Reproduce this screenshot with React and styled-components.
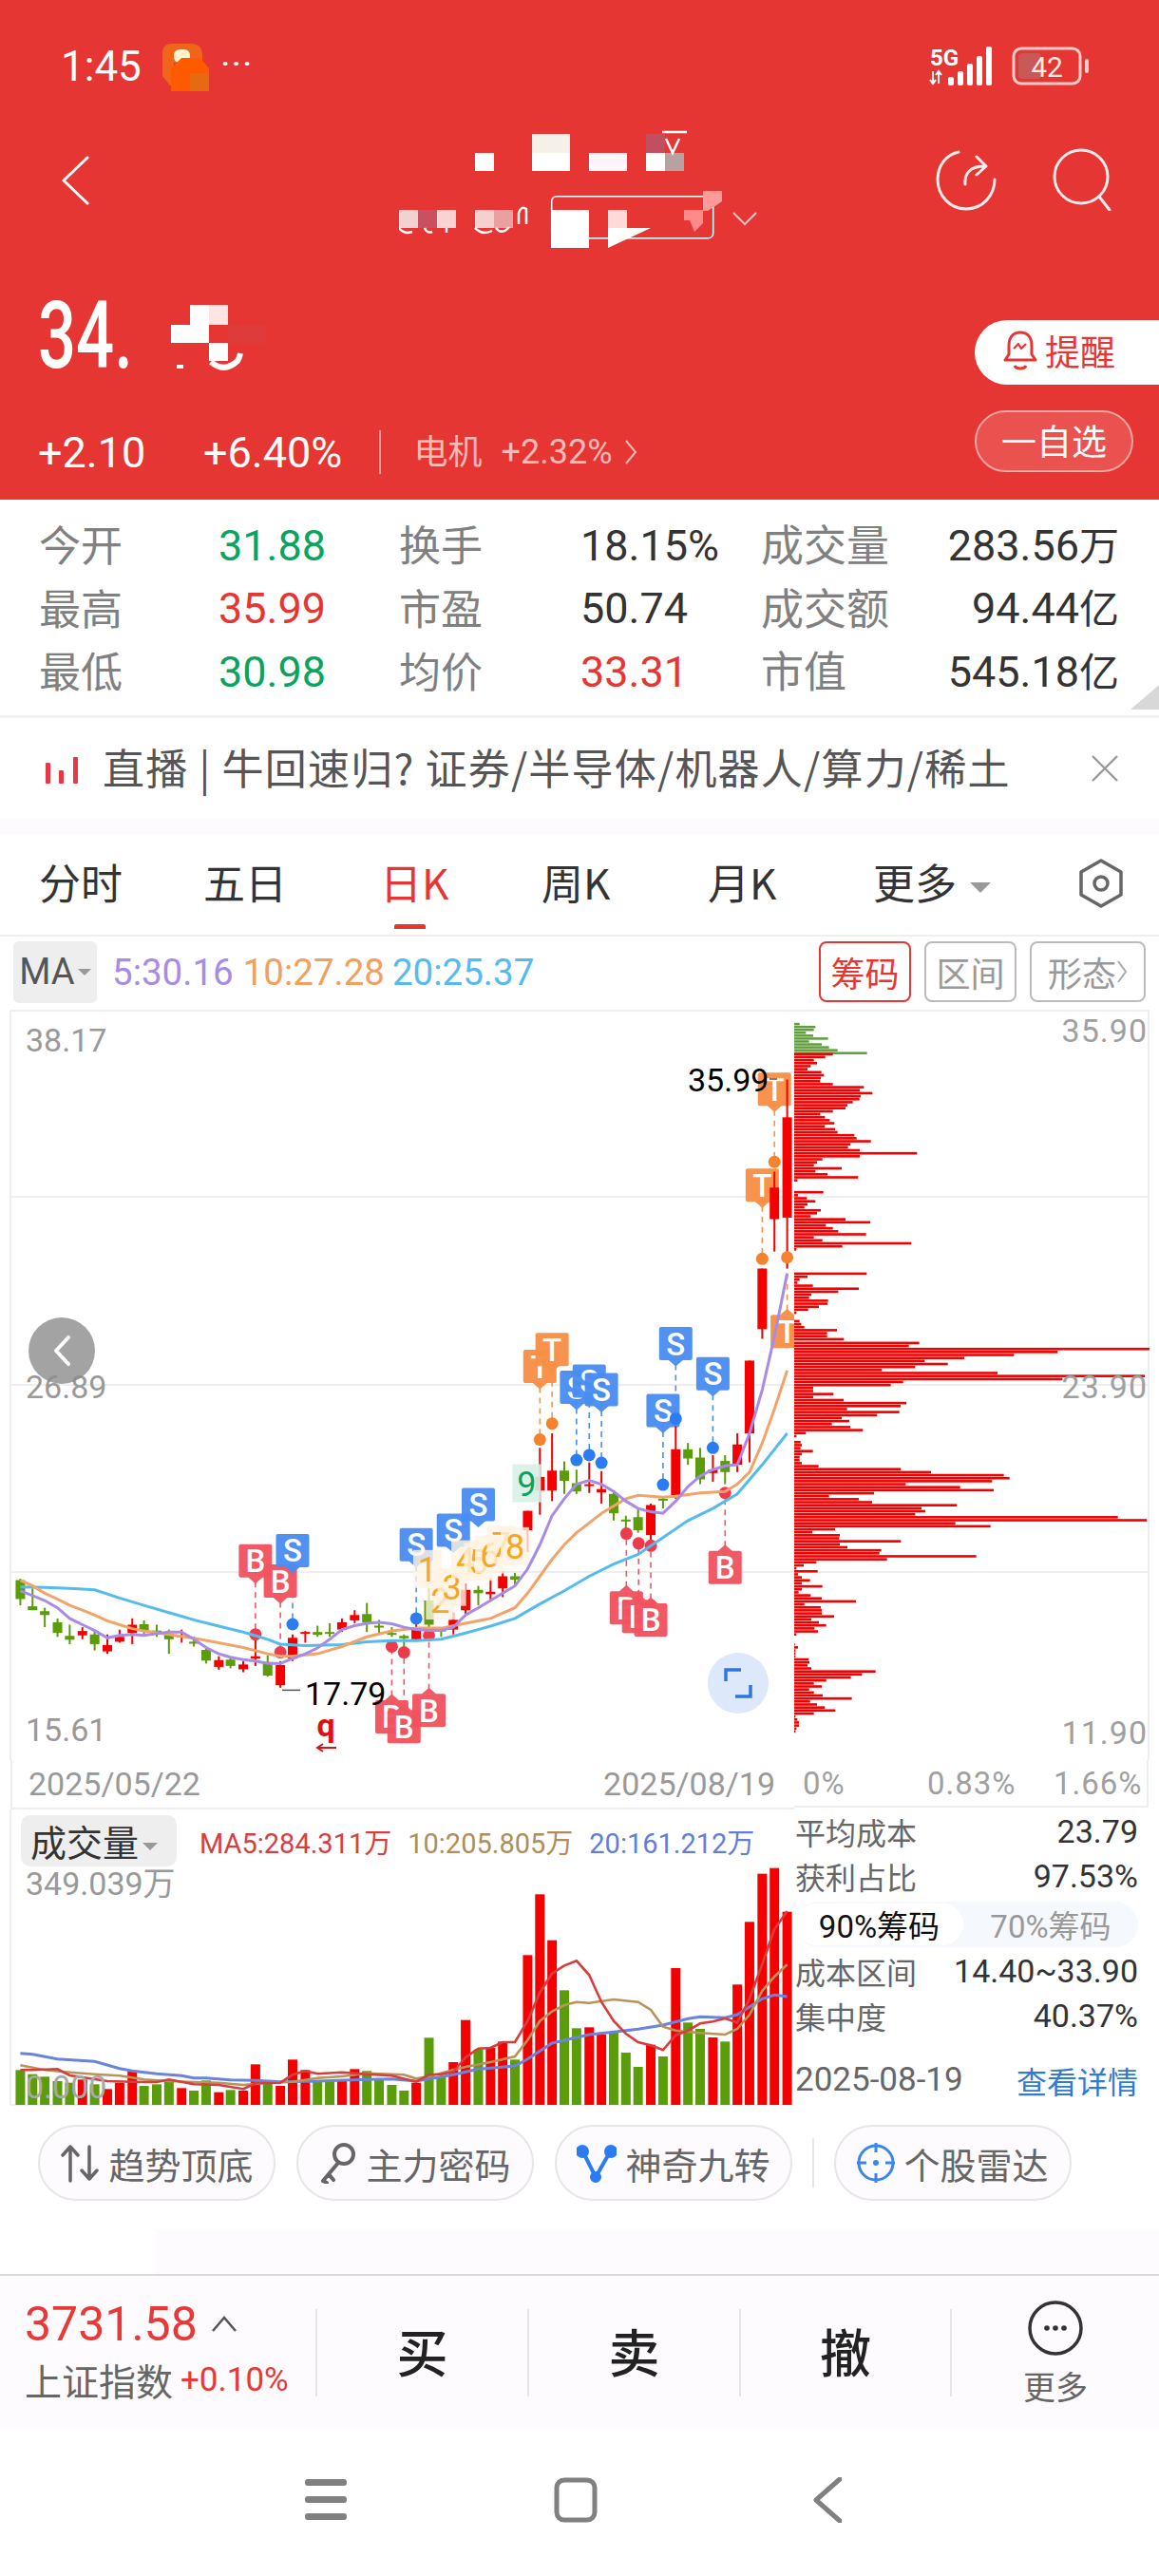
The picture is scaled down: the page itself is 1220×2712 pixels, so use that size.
import React from 'react';
import styled, {createGlobalStyle} from 'styled-components';

const CJK = '"Noto Sans CJK SC", "Noto Sans", sans-serif';
const NUM = 'Roboto, "Noto Sans CJK SC", sans-serif';

const GlobalStyle = createGlobalStyle`
  html, body { margin: 0; padding: 0; background: #fff; }
  body { font-family: ${CJK}; }
`;

const Page = styled.div`
  width: 1220px;
  height: 2712px;
  overflow: hidden;
  background: #fff;
`;

/* ---------- red header ---------- */
const Header = styled.header`
  height: 526px;
  background: #e63633;
  color: #fff;
  overflow: hidden;
`;
const StatusBar = styled.div`
  height: 128px;
  padding: 12px 72px 0 64px;
  display: flex;
  align-items: center;
  box-sizing: border-box;
`;
const Clock = styled.span`
  font: 400 44px ${NUM};
  width: 107px;
`;
const More = styled.span`
  font: 700 28px ${NUM};
  letter-spacing: 3px;
  margin: -8px 0 0 12px;
`;
const StatusRight = styled.div`
  margin-left: auto;
  display: flex;
`;
const NavRow = styled.div`
  height: 144px;
  box-sizing: border-box;
  display: flex;
  align-items: flex-start;
  padding: 2px 50px 0 64px;
`;
const BackWrap = styled.div`
  margin-top: 34px;
  width: 30px;
`;
const Mosaic = styled.svg`
  margin-left: 326px;
  display: block;
`;
const NavIcons = styled.div`
  margin-left: auto;
  display: flex;
  gap: 59px;
  padding-top: 26px;
`;
const QuoteRow = styled.div`
  display: flex;
  height: 254px;
`;
const QuoteLeft = styled.div`
  flex: 1;
  padding-left: 40px;
`;
const PriceBox = styled.div`
  position: relative;
  height: 98px;
  margin-top: 33px;
`;
const Price = styled.div`
  font: 500 98px/98px ${NUM};
  transform: scaleX(0.72);
  transform-origin: left;
  white-space: nowrap;
`;
const PriceMask = styled.svg`
  position: absolute;
  left: 140px;
  top: 13px;
`;
const ChangeRow = styled.div`
  display: flex;
  align-items: center;
  margin-top: 50px;
  height: 46px;
`;
const ChangeVal = styled.span`
  font: 400 45px ${NUM};
  width: ${p => p.$w}px;
`;
const VLine = styled.span`
  width: 1.5px;
  height: 46px;
  background: #f09a98;
  margin-right: 35px;
`;
const Sector = styled.span`
  font: 400 36px/40px ${CJK};
  color: #f8b9b7;
  margin: -6px 20px 0 0;
`;
const SectorPct = styled.span`
  font: 400 36px ${NUM};
  color: #f8b9b7;
  margin-right: 12px;
`;
const QuoteRight = styled.div`
  width: 194px;
  padding-top: 65px;
  display: flex;
  flex-direction: column;
`;
const RemindBtn = styled.div`
  height: 68px;
  box-sizing: border-box;
  background: #fff;
  border-radius: 34px 0 0 34px;
  color: #e63633;
  font: 400 37px/44px ${CJK};
  display: flex;
  align-items: center;
  padding: 0 0 4px 30px;
  gap: 8px;
`;
const WatchBtn = styled.div`
  margin-top: 27px;
  width: 167px;
  height: 65px;
  box-sizing: border-box;
  border: 2px solid #f3a5a3;
  background: #ea5250;
  border-radius: 33px;
  font: 400 37px/44px ${CJK};
  display: flex;
  align-items: center;
  justify-content: center;
  padding-bottom: 4px;
  color: #fff;
`;

/* ---------- quote table ---------- */
const QuoteTable = styled.section`
  height: 230px;
  box-sizing: border-box;
  padding: 15px 42px 0 41px;
  position: relative;
  display: grid;
  grid-template-columns: 189px 190px 191px 190px 133px 1fr;
  grid-auto-rows: 66.5px;
  align-items: center;
  border-bottom: 3px solid #f2f2f2;
`;
const Label = styled.span`
  font: 400 ${p => p.$size || 44}px/60px ${CJK};
  color: #808080;
  margin-top: -4px;
  white-space: nowrap;
`;
const Val = styled.span`
  font: 400 ${p => p.$size || 45}px ${NUM};
  color: ${p => p.$color || '#333'};
  text-align: ${p => p.$right ? 'right' : 'left'};
  white-space: nowrap;
`;
const CjkUnit = styled.span`
  font-family: ${CJK};
  font-size: 42px;
  line-height: 40px;
`;
const CornerMark = styled.span`
  position: absolute;
  right: 0;
  bottom: 6px;
  border-style: solid;
  border-width: 0 0 26px 30px;
  border-color: transparent transparent #d8d8d8 transparent;
`;

/* ---------- notice ---------- */
const Notice = styled.div`
  height: 106px;
  display: flex;
  align-items: center;
  padding: 0 42px 0 48px;
  gap: 26px;
`;
const NoticeText = styled.span`
  font: 400 44px/60px ${CJK};
  letter-spacing: 1.2px;
  color: #555;
  flex: 1;
  white-space: nowrap;
  margin-top: -5px;
`;
const PaleBand = styled.div`
  height: 17px;
  background: #fdfbfd;
`;

/* ---------- tabs ---------- */
const Tabs = styled.nav`
  height: 107px;
  display: flex;
  align-items: center;
  padding: 0 38px 8px 41px;
  box-sizing: border-box;
  border-bottom: 2px solid #eee;
  position: relative;
`;
const Tab = styled.span`
  font: 400 44px/64px ${CJK};
  color: ${p => p.$active ? '#e63633' : '#333'};
  width: ${p => p.$w}px;
  white-space: nowrap;
  position: relative;
`;
const TabMark = styled.i`
  position: absolute;
  left: 15px;
  top: 77px;
  width: 33px;
  height: 5px;
  border-radius: 2px 2px 0 0;
  background: #e63633;
`;
const Caret = styled.i`
  display: inline-block;
  margin-left: ${p => p.$gap || 0}px;
  border-style: solid;
  border-width: ${p => p.$s}px ${p => p.$s}px 0;
  border-color: #999 transparent transparent;
  vertical-align: middle;
`;
const SettingIcon = styled.svg`
  margin-left: auto;
  margin-bottom: -4px;
`;

/* ---------- indicator row ---------- */
const MaRow = styled.div`
  height: 74px;
  display: flex;
  align-items: center;
  padding: 0 14px;
`;
const MaBox = styled.div`
  flex: 0 0 88px;
  height: 65px;
  background: #eee;
  border-radius: 6px;
  font: 400 38px ${NUM};
  color: #555;
  display: flex;
  align-items: center;
  justify-content: center;
  margin-right: 16px;
  white-space: nowrap;
`;
const MaVal = styled.span`
  font: 400 38.5px ${NUM};
  color: ${p => p.$color};
  margin-right: ${p => p.$gap}px;
  white-space: nowrap;
`;
const MaBtn = styled.span`
  flex: 0 0 ${p => p.$w}px;
  height: 64px;
  box-sizing: border-box;
  border: 2px solid ${p => p.$on ? '#e63633' : '#bbb'};
  color: ${p => p.$on ? '#e63633' : '#999'};
  border-radius: 8px;
  font: 400 36px ${CJK};
  display: flex;
  align-items: center;
  justify-content: center;
  margin-left: ${p => p.$auto ? 'auto' : '14px'};
  white-space: nowrap;
`;

/* ---------- chart area ---------- */
const ChartGrid = styled.section`
  display: grid;
  grid-template-columns: 836px 384px;
  height: 1156px;
`;
const ChartCol = styled.div`
  position: relative;
  min-width: 0;
`;
const Plot = styled.svg`
  display: block;
`;
const DateRow = styled.div`
  height: 50px;
  margin-left: 11px;
  border-bottom: 2px solid #eee;
  border-left: 2px solid #eee;
  display: flex;
  align-items: center;
  justify-content: space-between;
  padding: 0 20px 0 17px;
  font: 400 34px ${NUM};
  color: #999;
`;
const PctRow = styled.div`
  width: 373px;
  box-sizing: border-box;
  height: 50px;
  border-bottom: 2px solid #eee;
  border-right: 2px solid #eee;
  display: grid;
  grid-template-columns: 131px 133px 1fr;
  align-items: center;
  padding-left: 9px;
  font: 400 33px ${NUM};
  letter-spacing: 1px;
  color: #a0a0a0;
`;
const FloatBack = styled.div`
  position: absolute;
  left: 30px;
  top: 327px;
  width: 70px;
  height: 70px;
  border-radius: 50%;
  background: rgba(140, 140, 140, 0.8);
  display: flex;
  align-items: center;
  justify-content: center;
`;
const FloatExpand = styled.div`
  position: absolute;
  left: 745px;
  top: 680px;
  width: 64px;
  height: 64px;
  border-radius: 50%;
  background: #dde8fb;
  display: flex;
  align-items: center;
  justify-content: center;
`;
const VolHead = styled.div`
  position: absolute;
  left: 22px;
  top: 851px;
  display: flex;
  align-items: center;
`;
const VolBox = styled.div`
  width: 164px;
  height: 54px;
  box-sizing: border-box;
  background: #eee;
  border-radius: 10px;
  padding-left: 10px;
  font: 400 38px/54px ${CJK};
  color: #333;
  margin-right: 24px;
  white-space: nowrap;
`;
const VolVal = styled.span`
  font: 400 29px ${NUM};
  color: ${p => p.$color};
  margin-right: 17px;
  white-space: nowrap;
`;
const VolPeak = styled.div`
  position: absolute;
  left: 27px;
  top: 896px;
  font: 400 34px ${NUM};
  color: #999;
`;
const VolZero = styled.div`
  position: absolute;
  left: 27px;
  top: 1117px;
  font: 400 34px ${NUM};
  color: #a8a8a8;
`;

const InfoPanel = styled.div`
  padding: 0 22px 0 1px;
`;
const InfoRow = styled.div`
  height: 47px;
  display: flex;
  justify-content: space-between;
  align-items: center;
  margin-top: ${p => p.$top || 0}px;
`;
const InfoLabel = styled.span`
  font: 400 32px/44px ${CJK};
  color: #666;
`;
const InfoDate = styled.span`
  font: 400 35px ${NUM};
  color: #666;
`;
const InfoVal = styled.span`
  font: 400 34px ${NUM};
  color: #333;
`;
const InfoLink = styled.span`
  font: 400 32px ${CJK};
  color: #2f7bd0;
`;
const Toggle = styled.div`
  height: 48px;
  display: flex;
  background: #f5f8fc;
  border-radius: 24px;
  margin: 4px 0 1px;
`;
const ToggleItem = styled.span`
  flex: ${p => p.$on ? '0 0 177px' : 1};
  background: ${p => p.$on ? '#fff' : 'transparent'};
  color: ${p => p.$on ? '#111' : '#999'};
  border-radius: 22px;
  margin: 2px 0;
  font: 400 33px ${NUM};
  display: flex;
  align-items: center;
  justify-content: center;
  white-space: nowrap;
`;

/* ---------- pills ---------- */
const PillRow = styled.div`
  height: 130px;
  display: flex;
  align-items: flex-start;
  padding: 21px 0 0 40px;
  box-sizing: border-box;
  gap: 22px;
`;
const Pill = styled.div`
  width: 250px;
  height: 80px;
  box-sizing: border-box;
  border: 2px solid #e6e6e6;
  background: #fdfbfd;
  border-radius: 40px;
  display: flex;
  align-items: center;
  justify-content: center;
  gap: 9px;
  font: 400 38px ${CJK};
  color: #666;
  white-space: nowrap;
`;
const PillSep = styled.span`
  width: 2px;
  height: 52px;
  margin: 14px -1px 0 -1px;
  background: #e6e6e6;
`;
const BlankBand = styled.div`
  height: 48px;
  margin-left: 163px;
  background: #fdfbfd;
`;

/* ---------- trade bar ---------- */
const TradeBar = styled.div`
  height: 164px;
  background: #fdfbfd;
  border-top: 2px solid #d9d9d9;
  box-sizing: border-box;
  display: flex;
  align-items: center;
`;
const IndexBox = styled.div`
  width: 332px;
  height: 120px;
  box-sizing: border-box;
  padding-left: 26px;
`;
const IndexTop = styled.div`
  display: flex;
  align-items: center;
  height: 60px;
  gap: 14px;
`;
const IndexNum = styled.span`
  font: 400 50px ${NUM};
  color: #e83838;
`;
const IndexBottom = styled.div`
  display: flex;
  align-items: center;
  height: 56px;
  gap: 8px;
`;
const IndexName = styled.span`
  font: 400 39px/50px ${CJK};
  color: #666;
  white-space: nowrap;
`;
const IndexPct = styled.span`
  font: 400 35px ${NUM};
  color: #e83838;
`;
const TradeBtn = styled.div`
  width: ${p => p.$w}px;
  height: 92px;
  border-left: 2px solid #e6e6e6;
  box-sizing: border-box;
  display: flex;
  align-items: center;
  justify-content: center;
  font: 500 54px/70px ${CJK};
  color: #222;
  padding-bottom: 4px;
`;
const MoreBtn = styled.div`
  flex: 1;
  height: 92px;
  border-left: 2px solid #e6e6e6;
  display: flex;
  flex-direction: column;
  align-items: center;
  justify-content: center;
  font: 400 34px/40px ${CJK};
  color: #666;
  gap: 12px;
`;

/* ---------- system nav ---------- */
const SysNav = styled.div`
  height: 152px;
  display: flex;
  align-items: flex-start;
  padding: 50px 0 0 320px;
  box-sizing: border-box;
`;
const SysIcon = styled.svg`
  margin-right: ${p => p.$gap}px;
`;

/* ---------- chart data, in crop coordinates read off the screenshot ---------- */
const cx = x => x / 1.867;
const cy = y => y / 1.96;
const vy = y => y / 3 - 54;
const chipW = end => (end - 18) / 3;

const UP = '#f50000';
const DOWN = '#5b9c0a';

// x, colour, wick top, body top, body bottom, wick bottom
const candles = [
  [40, 'g', 1180, 1183, 1222, 1235], [64, 'g', 1200, 1237, 1245, 1245], [88, 'g', 1240, 1247, 1255, 1280],
  [113, 'g', 1262, 1270, 1292, 1300], [137, 'g', 1275, 1298, 1306, 1315], [162, 'r', 1280, 1288, 1297, 1305],
  [186, 'g', 1285, 1295, 1315, 1328], [211, 'r', 1295, 1317, 1330, 1335], [235, 'r', 1285, 1300, 1310, 1312],
  [260, 'r', 1262, 1275, 1292, 1315], [283, 'g', 1266, 1274, 1288, 1295], [308, 'g', 1275, 1287, 1290, 1300],
  [332, 'g', 1285, 1295, 1305, 1335], [357, 'r', 1285, 1297, 1300, 1312], [381, 'g', 1300, 1310, 1314, 1320],
  [405, 'g', 1320, 1327, 1349, 1355], [430, 'r', 1340, 1348, 1362, 1368], [453, 'g', 1342, 1347, 1360, 1365],
  [478, 'r', 1350, 1357, 1367, 1373], [502, 'r', 1300, 1340, 1345, 1360], [526, 'g', 1338, 1352, 1380, 1382],
  [551, 'r', 1350, 1358, 1400, 1405], [575, 'r', 1295, 1302, 1345, 1350], [600, 'r', 1288, 1290, 1293, 1312],
  [624, 'g', 1277, 1290, 1296, 1300], [648, 'g', 1272, 1290, 1293, 1300], [672, 'r', 1262, 1270, 1285, 1290],
  [697, 'r', 1245, 1255, 1266, 1272], [721, 'g', 1230, 1253, 1270, 1290], [745, 'g', 1265, 1277, 1280, 1295],
  [770, 'g', 1280, 1292, 1295, 1300], [794, 'g', 1295, 1298, 1303, 1320], [818, 'r', 1265, 1285, 1305, 1305],
  [843, 'g', 1200, 1225, 1275, 1290], [867, 'g', 1280, 1285, 1288, 1300], [891, 'r', 1250, 1265, 1285, 1295],
  [915, 'r', 1190, 1203, 1245, 1255], [940, 'g', 1195, 1203, 1210, 1235], [964, 'r', 1180, 1207, 1212, 1225],
  [988, 'r', 1165, 1175, 1200, 1218], [1012, 'g', 1168, 1175, 1182, 1195], [1037, 'r', 1040, 1040, 1080, 1125],
  [1061, 'r', 910, 970, 998, 1048], [1085, 'r', 880, 957, 998, 1020], [1109, 'g', 938, 957, 978, 1005],
  [1133, 'g', 955, 983, 1000, 1005], [1158, 'r', 940, 985, 988, 1003], [1182, 'r', 958, 995, 1002, 1025],
  [1206, 'g', 1000, 1005, 1045, 1060], [1230, 'g', 1050, 1058, 1061, 1090], [1254, 'g', 1035, 1053, 1080, 1085],
  [1279, 'r', 1025, 1028, 1090, 1110], [1303, 'g', 1010, 1015, 1018, 1035], [1328, 'r', 865, 913, 1008, 1015],
  [1352, 'g', 900, 913, 932, 945], [1376, 'g', 910, 930, 975, 985], [1401, 'r', 925, 955, 962, 980],
  [1425, 'g', 925, 937, 960, 985], [1449, 'r', 880, 903, 945, 960], [1473, 'r', 730, 730, 880, 940],
  [1498, 'r', 540, 540, 665, 685], [1522, 'r', 340, 373, 438, 505], [1547, 'r', 150, 228, 435, 540],
];

const ma5 = [[40,1205],[64,1215],[88,1225],[113,1240],[137,1262],[162,1275],[186,1287],[211,1302],[235,1297],[260,1295],[283,1297],[308,1293],[332,1290],[357,1290],[381,1305],[405,1322],[430,1335],[453,1342],[478,1347],[502,1350],[526,1355],[551,1355],[575,1345],[600,1335],[624,1323],[648,1305],[672,1285],[697,1277],[721,1272],[745,1270],[770,1273],[794,1280],[818,1285],[843,1287],[867,1287],[891,1280],[915,1255],[940,1240],[964,1225],[988,1210],[1012,1195],[1037,1160],[1061,1110],[1085,1050],[1109,1015],[1133,985],[1158,977],[1182,985],[1206,1000],[1230,1020],[1254,1035],[1279,1042],[1303,1045],[1328,1020],[1352,990],[1376,968],[1401,955],[1425,947],[1449,945],[1473,880],[1498,790],[1522,680],[1547,550]];
const ma10 = [[40,1183],[64,1195],[88,1210],[113,1222],[137,1235],[162,1245],[186,1255],[211,1267],[235,1275],[260,1283],[283,1288],[332,1295],[381,1303],[430,1312],[478,1322],[526,1335],[551,1340],[575,1340],[624,1335],[672,1320],[721,1300],[770,1288],[818,1282],[867,1282],[915,1272],[964,1262],[1012,1240],[1037,1210],[1061,1175],[1085,1140],[1109,1110],[1133,1085],[1158,1065],[1182,1045],[1206,1030],[1230,1015],[1254,1008],[1279,1010],[1303,1012],[1328,1010],[1376,1003],[1425,1000],[1449,985],[1473,960],[1498,900],[1522,830],[1547,750]];
const ma20 = [[40,1197],[88,1198],[137,1200],[186,1203],[235,1220],[283,1235],[332,1250],[381,1265],[430,1278],[478,1290],[526,1305],[551,1315],[600,1318],[672,1316],[721,1310],[770,1308],[818,1308],[867,1305],[915,1292],[964,1278],[1012,1262],[1061,1232],[1109,1205],[1158,1175],[1206,1150],[1254,1130],[1303,1095],[1352,1060],[1401,1035],[1449,1005],[1498,945],[1547,880]];

// letter, x, box centre y, dot y, pointer up
const flags = [
  ['B', 502, 1143, 1295], ['B', 551, 1185, 1332], ['S', 575, 1122, 1274], ['S', 818, 1110, 1262],
  ['S', 891, 1080, null], ['S', 940, 1027, null],
  ['T', 1061, 742, 893], ['T', 1085, 707, 860],
  ['S', 1133, 785, 935], ['S', 1158, 772, 925], ['S', 1182, 790, 941],
  ['S', 1303, 833, 986], ['S', 1328, 695, 850], ['S', 1401, 757, 910],
  ['T', 1498, 368, 520], ['T', 1522, 170, 320],
  ['B', 770, 1465, 1320, true], ['B', 794, 1485, 1332, true], ['B', 843, 1452, 1297, true],
  ['B', 1231, 1240, 1087, true], ['B', 1255, 1258, 1107, true], ['B', 1279, 1265, 1112, true],
  ['B', 1425, 1157, 1003, true], ['T', 1547, 670, 517, true],
];
const flagColor = {S: '#4a8df0', T: '#f78f45', B: '#f0535f'};
const dotColor = {S: '#2b7cf0', T: '#f5822c', B: '#ee3b4c'};

const nines = [
  ['1', 840, 1160], ['2', 865, 1225], ['3', 888, 1197], ['4', 915, 1140],
  ['5', 940, 1145], ['6', 962, 1130], ['7', 985, 1110], ['8', 1012, 1113],
];

const volumes = [
  [40,'g',985],[64,'g',998],[88,'g',1006],[113,'g',1020],[137,'g',1025],[162,'r',1015],[186,'g',1030],[211,'r',1045],
  [235,'r',1025],[260,'r',990],[283,'g',1035],[308,'g',1030],[332,'g',1020],[357,'r',1042],[381,'g',1050],[405,'g',1018],
  [430,'r',1055],[453,'g',1048],[478,'r',1050],[502,'r',967],[526,'g',1025],[551,'r',1035],[575,'r',952],[600,'r',985],
  [624,'g',1020],[648,'g',1020],[672,'r',1020],[697,'r',982],[721,'g',988],[745,'g',1012],[770,'g',1032],[794,'g',1050],
  [818,'r',1025],[843,'g',883],[867,'g',1005],[891,'r',960],[915,'r',827],[940,'g',920],[964,'r',915],[988,'r',895],
  [1012,'g',952],[1037,'r',622],[1061,'r',430],[1085,'r',575],[1109,'g',733],[1133,'g',853],[1158,'r',850],[1182,'r',873],
  [1206,'g',865],[1230,'g',930],[1254,'g',975],[1279,'r',905],[1303,'g',942],[1328,'r',663],[1352,'g',835],[1376,'g',855],
  [1401,'r',882],[1425,'g',895],[1449,'r',715],[1473,'r',517],[1498,'r',365],[1522,'r',347],[1547,'r',485],
];
const volMa5 = [[40,985],[64,985],[113,982],[137,1002],[162,1008],[211,1020],[260,1022],[308,1023],[332,1015],[381,1030],[430,1032],[478,1045],[502,1027],[551,1025],[575,1000],[600,988],[624,997],[672,992],[721,998],[770,1003],[818,1022],[843,1000],[867,998],[891,990],[915,945],[940,917],[964,915],[988,897],[1012,897],[1037,830],[1061,740],[1085,680],[1109,655],[1133,640],[1158,685],[1182,770],[1206,830],[1230,870],[1254,897],[1279,907],[1303,922],[1328,875],[1352,860],[1376,838],[1401,832],[1425,822],[1449,835],[1473,760],[1498,650],[1522,540],[1547,483]];
const volMa10 = [[40,970],[88,985],[137,992],[186,998],[235,1003],[283,1015],[332,1020],[381,1023],[430,1025],[478,1032],[526,1025],[575,1022],[624,1010],[672,1005],[721,995],[770,998],[794,1000],[818,1012],[843,1005],[891,985],[915,975],[964,960],[1012,942],[1037,890],[1061,830],[1085,800],[1109,780],[1133,770],[1158,773],[1206,762],[1254,770],[1279,795],[1303,848],[1328,860],[1376,868],[1425,873],[1449,855],[1473,810],[1498,735],[1522,690],[1547,652]];
const volMa20 = [[40,932],[64,935],[113,950],[186,958],[235,980],[260,988],[308,997],[357,1003],[381,1010],[405,1010],[453,1016],[502,1018],[551,1022],[624,1020],[721,1015],[770,1013],[818,1020],[891,1000],[940,982],[1012,972],[1037,950],[1085,900],[1133,882],[1158,873],[1206,865],[1254,856],[1303,843],[1352,823],[1376,817],[1425,820],[1449,810],[1498,760],[1522,748],[1547,753]];

// [start y, bar ends...] for the chip distribution
const chipGreen = [35, 85, 80, 55, 78, 125, 65, 105, 128, 155, 248];
const chipRed = [
  [97, 140,116,80,90,70,60,104,112,102,100,140,238,225,265,228,224,203,186,180,140,100,115,130,145,115,147,155,208,215,260,195,188,225,406,225,107,90,80,168,85,123,220,28],
  [382, 110,30,58,85,60,50,102,90,70,180,258,118,140,157,245,80,107,388,170,25],
  [550, 247,60,35,28,77,222,157,72,65,125,123,96,62,25],
  [648, 35,40,50,153,122,122,175],
  [693, 413,380,1140,850,712,555,430,503,400,295,660,1125,865,362,323,78,78,142,78,174,372,354,185,350,280,168,192,137,195,235,55,25,18,38,42,38,77,42,35,35,42,95,355,450,680,698,643,370,542,648,270,128,222,264,532,420,432,400,1040,1132,527,638,147,75,162,160,355,162,186,293,287,593,311,88,48,25,92,30,42,68,42,107,42,32,70,105,213,50,102,105,105,144,72,96,119,82,93,25],
  [1315, 20,30,22,22,22,64,66,60,72,275,232,197,119,80,105,65,80,108,200,68,90,115,148,80,22,28,33,33,25,22],
];

const pts = (list, fy) => list.map(([x, y]) => `${cx(x).toFixed(1)},${fy(y).toFixed(1)}`).join(' ');

const AxisText = styled.text`
  font: 400 34px ${NUM};
  fill: ${p => p.$color || '#999'};
`;
const FlagText = styled.text`
  font: 500 33px ${NUM};
  fill: #fff;
  text-anchor: middle;
`;
const NineText = styled.text`
  font: 400 36px ${NUM};
  text-anchor: middle;
  fill: ${p => p.$color};
`;
const ExtremeText = styled.text`
  font: 400 34px ${NUM};
  fill: #000;
`;
const GlitchText = styled.text`
  font: 700 34px ${NUM};
  fill: #e01010;
  text-anchor: middle;
`;

function Flag({item}) {
  const [kind, x, y, , up] = item;
  const fx = cx(x), fy = cy(y);
  const tip = up
    ? `${fx - 8},${fy - 17} ${fx},${fy - 24} ${fx + 8},${fy - 17}`
    : `${fx - 8},${fy + 17} ${fx},${fy + 24} ${fx + 8},${fy + 17}`;
  return (
    <g>
      <rect x={fx - 17.5} y={fy - 17.5} width={35} height={35} rx={2} fill={flagColor[kind]} opacity={0.96}/>
      <polygon points={tip} fill={flagColor[kind]} opacity={0.96}/>
      <FlagText x={fx} y={fy + 12}>{kind}</FlagText>
    </g>
  );
}

function CandlePlot() {
  return (
    <Plot width="836" height="793" viewBox="0 0 836 793">
      <path d="M11 4H836M11 4V793" fill="none" stroke="#eee" strokeWidth="2"/>
      {[200, 398, 595].map(y => <line key={y} x1="11" x2="836" y1={y} y2={y} stroke="#eee" strokeWidth="2"/>)}
      <AxisText x="27" y="47">38.17</AxisText>
      <AxisText x="27" y="412">26.89</AxisText>
      <AxisText x="27" y="773">15.61</AxisText>

      {flags.filter(f => f[3]).map((f, i) => (
        <line key={i} x1={cx(f[1])} x2={cx(f[1])} y1={cy(f[2])} y2={cy(f[3])}
              stroke={dotColor[f[0]]} strokeWidth="1.6" strokeDasharray="6 5" opacity="0.85"/>
      ))}
      {flags.map((f, i) => <Flag key={i} item={f}/>)}

      {candles.map(([x, c, wt, bt, bb, wb]) => (
        <g key={x} fill={c === 'r' ? UP : DOWN}>
          <rect x={cx(x) - 1} y={cy(wt)} width="2" height={cy(wb) - cy(wt)}/>
          <rect x={cx(x) - 5} y={cy(bt)} width="10" height={Math.max(cy(bb) - cy(bt), 2)}/>
        </g>
      ))}

      {nines.map(([n, x, y]) => (
        <g key={n}>
          <rect x={cx(x) - 15} y={cy(y) - 20} width="30" height="40" fill="#fff3e2" opacity="0.8"/>
          <NineText x={cx(x)} y={cy(y) + 13} $color="#f5a623">{n}</NineText>
        </g>
      ))}
      <rect x={cx(1035) - 15} y={cy(983) - 20} width="30" height="40" fill="#d8f1e6" opacity="0.9"/>
      <NineText x={cx(1035)} y={cy(983) + 13} $color="#0aa35c">9</NineText>

      {flags.filter(f => f[3]).map((f, i) => (
        <circle key={i} cx={cx(f[1])} cy={cy(f[3])} r="6.5" fill={dotColor[f[0]]}/>
      ))}

      <polyline points={pts(ma20, cy)} fill="none" stroke="#55bbee" strokeWidth="3"/>
      <polyline points={pts(ma10, cy)} fill="none" stroke="#f2a36a" strokeWidth="3"/>
      <polyline points={pts(ma5, cy)} fill="none" stroke="#a78be6" strokeWidth="3"/>

      <ExtremeText x="724" y="89">35.99</ExtremeText>
      <line x1="810" x2="818" y1="76" y2="76" stroke="#555" strokeWidth="1.5"/>
      <line x1="297" x2="316" y1={cy(1410)} y2={cy(1410)} stroke="#555" strokeWidth="1.5"/>
      <ExtremeText x="321" y="735">17.79</ExtremeText>
      <GlitchText x="343" y="768">q</GlitchText>
      <path d="M354 780H334M340 776l-6 4 6 4" fill="none" stroke="#e01010" strokeWidth="2"/>
    </Plot>
  );
}

function ChipPlot() {
  const bars = [];
  chipRed.forEach(seg => {
    const [start, ...ends] = seg;
    ends.forEach((end, i) => bars.push({y: start + i * 6.2, end}));
  });
  return (
    <Plot width="384" height="793" viewBox="0 0 384 793">
      <path d="M0 4H373V793" fill="none" stroke="#eee" strokeWidth="2"/>
      {[200, 398, 595].map(y => <line key={y} x1="0" x2="373" y1={y} y2={y} stroke="#eee" strokeWidth="2"/>)}
      {chipGreen.map((end, i) => (
        <rect key={i} x="0" y={cy(35 + i * 6) - 1} width={chipW(end)} height="2.5" fill="#5f9e3c"/>
      ))}
      {bars.map((b, i) => (
        <rect key={i} x="0" y={cy(b.y) - 1} width={chipW(b.end)} height="2.6" fill="#f00000"/>
      ))}
      <AxisText x="372" y="37" textAnchor="end" letterSpacing="1" $color="#a0a0a0">35.90</AxisText>
      <AxisText x="372" y="412" textAnchor="end" letterSpacing="1" $color="#a0a0a0">23.90</AxisText>
      <AxisText x="372" y="776" textAnchor="end" letterSpacing="1" $color="#a0a0a0">11.90</AxisText>
    </Plot>
  );
}

function VolumePlot() {
  return (
    <Plot width="836" height="312" viewBox="0 0 836 312">
      <path d="M11 0V311" stroke="#eee" strokeWidth="2"/>
      <line x1="11" x2="836" y1="311" y2="311" stroke="#eee" strokeWidth="2"/>
      {volumes.map(([x, c, top]) => (
        <rect key={x} x={cx(x) - 5} y={vy(top)} width="10" height={vy(1095) - vy(top)} fill={c === 'r' ? UP : DOWN}/>
      ))}
      <polyline points={pts(volMa20, vy)} fill="none" stroke="#6a83dc" strokeWidth="3"/>
      <polyline points={pts(volMa10, vy)} fill="none" stroke="#b8935a" strokeWidth="2.6"/>
      <polyline points={pts(volMa5, vy)} fill="none" stroke="#d83c3c" strokeWidth="2.6"/>
    </Plot>
  );
}

/* ---------- little drawings ---------- */
const NotifyIcon = () => (
  <svg width="50" height="52" viewBox="0 0 50 52" style={{display: 'block', marginTop: 4}}>
    <path d="M0 34V10C0 3 4 0 10 0H30C38 0 42 4 42 12V20H12V44H8z" fill="#f0651a"/>
    <rect x="12" y="6" width="17" height="14" rx="6" fill="#fff3cc"/>
    <path d="M9 50V26L20 15H40L49 26V50z" fill="#ff5a00"/>
    <rect x="29" y="31" width="20" height="19" fill="#e66a10"/>
  </svg>
);

const SignalIcon = () => (
  <svg width="172" height="44" viewBox="0 0 172 44">
    <text x="3" y="21" fontFamily="Roboto, sans-serif" fontWeight="700" fontSize="24" fill="#fff">5G</text>
    <path d="M6 27v13M3 36l3 4 3-4M12 40V27M9 31l3-4 3 4" fill="none" stroke="#fff" strokeWidth="2"/>
    {[[22, 33], [32, 27], [42, 19], [52, 11], [62, 1]].map(([x, y]) => (
      <rect key={x} x={x} y={y} width="6" height={42 - y} rx="2" fill="#fff"/>
    ))}
    <rect x="91" y="3" width="70" height="37" rx="8" fill="none" stroke="#f7c9c7" strokeWidth="3"/>
    <rect x="96" y="8" width="24" height="27" rx="4" fill="#c95956"/>
    <text x="126" y="33" textAnchor="middle" fontFamily="Roboto, sans-serif" fontSize="30" fill="#fbe7e6">42</text>
    <rect x="166" y="14" width="4" height="15" rx="2" fill="#f7c9c7"/>
  </svg>
);

const MosaicBlocks = () => (
  <Mosaic width="380" height="135" viewBox="420 130 380 135">
    <rect x="500" y="161" width="20" height="19" fill="#fff"/>
    <rect x="560" y="141" width="40" height="20" fill="#f5f0e8"/>
    <rect x="560" y="161" width="40" height="19" fill="#fff"/>
    <rect x="620" y="161" width="40" height="19" fill="#fff5fa"/>
    <rect x="680" y="141" width="20" height="20" fill="#c05060"/>
    <rect x="680" y="161" width="20" height="19" fill="#fff"/>
    <rect x="700" y="161" width="20" height="19" fill="#b7a2a2"/>
    <path d="M697 139H723M701 146l7 15 7-15" fill="none" stroke="#fff" strokeWidth="2.5"/>
    <rect x="420" y="221" width="20" height="19" fill="#f2d2d0"/>
    <rect x="440" y="221" width="20" height="19" fill="#c85060"/>
    <rect x="460" y="221" width="20" height="19" fill="#f9d3d1"/>
    <rect x="500" y="221" width="20" height="19" fill="#f5d0ce"/>
    <rect x="520" y="221" width="20" height="19" fill="#e8a0a0"/>
    <path d="M420 240q5 7 14 4M447 240q2 6 8 4M470 240v5M500 240q8 8 18 3M522 240q6 8 14-1M546 236v-12q3-8 8-4v16" fill="none" stroke="#fff" strokeWidth="2.5"/>
    <rect x="580.7" y="206.7" width="170" height="44" rx="5" fill="none" stroke="#fff" strokeWidth="1.5"/>
    <rect x="580" y="221" width="40" height="40" fill="#fff"/>
    <rect x="640" y="221" width="20" height="19" fill="#ffd8d8"/>
    <polygon points="640,240 685,240 640,261" fill="#fff"/>
    <polygon points="740,201 760,201 760,212 745,222 740,222" fill="#ff9a9a"/>
    <polygon points="720,221 740,221 740,235 731,244 726,232 720,232" fill="#ff8a8a"/>
    <path d="M772 224l12 12 12-12" fill="none" stroke="#f7c5c3" strokeWidth="2"/>
  </Mosaic>
);

const PriceBlocks = () => (
  <PriceMask width="110" height="72" viewBox="180 318 110 72">
    <rect x="180" y="342" width="40" height="19" fill="#fff"/>
    <rect x="200" y="321" width="20" height="21" fill="#fff"/>
    <rect x="220" y="321" width="20" height="21" fill="#ffe4e4"/>
    <rect x="220" y="361" width="20" height="19" fill="#fff"/>
    <rect x="240" y="342" width="40" height="19" fill="#df3b3a"/>
    <rect x="186" y="384" width="7" height="4" fill="#fff"/>
    <path d="M222 381q14 12 28-1q2-3 3-8" fill="none" stroke="#fff" strokeWidth="6"/>
  </PriceMask>
);

const BellIcon = () => (
  <svg width="36" height="44" viewBox="0 0 36 44" fill="none" stroke="#e63633" strokeWidth="3" strokeLinejoin="round">
    <path d="M18 3C9 3 6 10 6 17v9l-4 6h32l-4-6v-9C30 10 27 3 18 3z"/>
    <path d="M12 38c2 4 10 4 12 0"/>
    <path d="M11 20l5-5 3 5 5-5" strokeWidth="2.2"/>
  </svg>
);

const Chevron = ({w = 28, h = 50, color = '#fff', stroke = 3}) => (
  <svg width={w} height={h} viewBox={`0 0 ${w} ${h}`}>
    <path d={`M${w - 2} 2L3 ${h / 2}L${w - 2} ${h - 2}`} fill="none" stroke={color} strokeWidth={stroke} strokeLinecap="round" strokeLinejoin="round"/>
  </svg>
);

const RightChevron = ({w = 14, h = 28, color}) => (
  <svg width={w} height={h} viewBox={`0 0 ${w} ${h}`}>
    <path d={`M2 2L${w - 2} ${h / 2}L2 ${h - 2}`} fill="none" stroke={color} strokeWidth="2"/>
  </svg>
);

const RefreshIcon = () => (
  <svg width="64" height="66" viewBox="0 0 64 66" fill="none" stroke="#fdeaea" strokeWidth="3" strokeLinecap="round" strokeLinejoin="round">
    <path d="M24 4C11 7 2 18 2 33c0 17 13 31 30 31s30-14 30-31"/>
    <path d="M31 38c-1-12 6-19 20-19M43 9l10 10-10 9"/>
  </svg>
);

const SearchIcon = () => (
  <svg width="62" height="66" viewBox="0 0 62 66" fill="none" stroke="#fdeaea" strokeWidth="3" strokeLinecap="round">
    <circle cx="30" cy="30" r="28"/>
    <path d="M49 51l11 14"/>
  </svg>
);

const LiveIcon = () => (
  <svg width="34" height="32" viewBox="0 0 34 32" fill="#e63945">
    <rect x="0" y="10" width="5" height="22" rx="1"/>
    <rect x="14" y="18" width="5" height="14" rx="1"/>
    <rect x="29" y="4" width="5" height="28" rx="1"/>
  </svg>
);

const CloseIcon = () => (
  <svg width="30" height="30" viewBox="0 0 30 30">
    <path d="M2 2L28 28M28 2L2 28" stroke="#999" strokeWidth="2.4"/>
  </svg>
);

const SettingGlyph = () => (
  <SettingIcon width="46" height="52" viewBox="0 0 46 52" fill="none" stroke="#666" strokeWidth="3.5">
    <path d="M23 2L44 14V38L23 50L2 38V14z" strokeLinejoin="round"/>
    <circle cx="23" cy="26" r="7"/>
  </SettingIcon>
);

const ExpandIcon = () => (
  <svg width="30" height="32" viewBox="0 0 30 32" fill="none" stroke="#2f75e0" strokeWidth="3.5">
    <path d="M2 14V2H18M28 18V30H12"/>
  </svg>
);

const TrendIcon = () => (
  <svg width="42" height="42" viewBox="0 0 42 42" fill="none" stroke="#666" strokeWidth="3.5" strokeLinecap="round" strokeLinejoin="round">
    <path d="M11 40V4M3 13l8-9 8 9M31 4v34M23 29l8 9 8-9"/>
  </svg>
);

const KeyIcon = () => (
  <svg width="40" height="44" viewBox="0 0 40 44" fill="none" stroke="#666" strokeWidth="4" strokeLinecap="round">
    <circle cx="26" cy="13" r="10"/>
    <path d="M20 22L4 41M10 34l5 6M4 41l4 2"/>
  </svg>
);

const NineIcon = () => (
  <svg width="42" height="42" viewBox="0 0 42 42" fill="none" stroke="#2b7cf0" strokeWidth="4">
    <path d="M6 8L20 36L36 8"/>
    <circle cx="6" cy="9" r="5" fill="#2b7cf0"/>
    <circle cx="36" cy="9" r="5" fill="#2b7cf0"/>
    <circle cx="20" cy="36" r="4" fill="#2b7cf0"/>
  </svg>
);

const RadarIcon = () => (
  <svg width="40" height="42" viewBox="0 0 40 42" fill="none" stroke="#3b86ea" strokeWidth="3">
    <circle cx="20" cy="21" r="18"/>
    <path d="M20 0V10M20 32V42M0 21H10M30 21H40"/>
    <circle cx="20" cy="21" r="3" fill="#3b86ea" stroke="none"/>
  </svg>
);

const MoreIcon = () => (
  <svg width="58" height="58" viewBox="0 0 58 58" style={{flex: 'none'}}>
    <circle cx="29" cy="29" r="27" fill="none" stroke="#333" strokeWidth="3.5"/>
    <circle cx="20" cy="29" r="2.8" fill="#333"/>
    <circle cx="29" cy="29" r="2.8" fill="#333"/>
    <circle cx="38" cy="29" r="2.8" fill="#333"/>
  </svg>
);

export default function App() {
  return (
    <Page>
      <GlobalStyle/>
      <Header>
        <StatusBar>
          <Clock>1:45</Clock>
          <NotifyIcon/>
          <More>···</More>
          <StatusRight><SignalIcon/></StatusRight>
        </StatusBar>
        <NavRow>
          <BackWrap><Chevron w={30} h={52}/></BackWrap>
          <MosaicBlocks/>
          <NavIcons>
            <RefreshIcon/>
            <SearchIcon/>
          </NavIcons>
        </NavRow>
        <QuoteRow>
          <QuoteLeft>
            <PriceBox>
              <Price>34.</Price>
              <PriceBlocks/>
            </PriceBox>
            <ChangeRow>
              <ChangeVal $w={174}>+2.10</ChangeVal>
              <ChangeVal $w={185}>+6.40%</ChangeVal>
              <VLine/>
              <Sector>电机</Sector>
              <SectorPct>+2.32%</SectorPct>
              <RightChevron color="#f8b9b7"/>
            </ChangeRow>
          </QuoteLeft>
          <QuoteRight>
            <RemindBtn><BellIcon/>提醒</RemindBtn>
            <WatchBtn>一自选</WatchBtn>
          </QuoteRight>
        </QuoteRow>
      </Header>

      <QuoteTable>
        <Label>今开</Label><Val $color="#0ba360">31.88</Val>
        <Label>换手</Label><Val>18.15%</Val>
        <Label $size={45}>成交量</Label><Val $right>283.56<CjkUnit>万</CjkUnit></Val>
        <Label>最高</Label><Val $color="#e63633">35.99</Val>
        <Label>市盈</Label><Val>50.74</Val>
        <Label $size={45}>成交额</Label><Val $right>94.44<CjkUnit>亿</CjkUnit></Val>
        <Label>最低</Label><Val $color="#0ba360">30.98</Val>
        <Label>均价</Label><Val $color="#e63633">33.31</Val>
        <Label $size={45}>市值</Label><Val $right>545.18<CjkUnit>亿</CjkUnit></Val>
        <CornerMark/>
      </QuoteTable>

      <Notice>
        <LiveIcon/>
        <NoticeText>直播 | 牛回速归? 证券/半导体/机器人/算力/稀土</NoticeText>
        <CloseIcon/>
      </Notice>
      <PaleBand/>

      <Tabs>
        <Tab $w={173}>分时</Tab>
        <Tab $w={186}>五日</Tab>
        <Tab $w={170} $active>日K<TabMark/></Tab>
        <Tab $w={175}>周K</Tab>
        <Tab $w={174}>月K</Tab>
        <Tab $w={140}>更多<Caret $s={11} $gap={14}/></Tab>
        <SettingGlyph/>
      </Tabs>

      <MaRow>
        <MaBox>MA<Caret $s={7} $gap={3}/></MaBox>
        <MaVal $color="#a78be6" $gap={10}>5:30.16</MaVal>
        <MaVal $color="#f0a060" $gap={8}>10:27.28</MaVal>
        <MaVal $color="#55bbee" $gap={0}>20:25.37</MaVal>
        <MaBtn $w={97} $on $auto>筹码</MaBtn>
        <MaBtn $w={97}>区间</MaBtn>
        <MaBtn $w={122}>形态<RightChevron w={12} h={26} color="#aaa"/></MaBtn>
      </MaRow>

      <ChartGrid>
        <ChartCol>
          <CandlePlot/>
          <DateRow><span>2025/05/22</span><span>2025/08/19</span></DateRow>
          <VolumePlot/>
          <FloatBack><Chevron w={18} h={32} stroke={4}/></FloatBack>
          <FloatExpand><ExpandIcon/></FloatExpand>
          <VolHead>
            <VolBox>成交量<Caret $s={8} $gap={4}/></VolBox>
            <VolVal $color="#d44040">MA5:284.311万</VolVal>
            <VolVal $color="#b08d5a">10:205.805万</VolVal>
            <VolVal $color="#5f7fd8">20:161.212万</VolVal>
          </VolHead>
          <VolPeak>349.039万</VolPeak>
          <VolZero>0.000</VolZero>
        </ChartCol>
        <ChartCol>
          <ChipPlot/>
          <PctRow><span>0%</span><span>0.83%</span><span>1.66%</span></PctRow>
          <InfoPanel>
            <InfoRow $top={1}><InfoLabel>平均成本</InfoLabel><InfoVal>23.79</InfoVal></InfoRow>
            <InfoRow><InfoLabel>获利占比</InfoLabel><InfoVal>97.53%</InfoVal></InfoRow>
            <Toggle>
              <ToggleItem $on>90%筹码</ToggleItem>
              <ToggleItem>70%筹码</ToggleItem>
            </Toggle>
            <InfoRow><InfoLabel>成本区间</InfoLabel><InfoVal>14.40~33.90</InfoVal></InfoRow>
            <InfoRow><InfoLabel>集中度</InfoLabel><InfoVal>40.37%</InfoVal></InfoRow>
            <InfoRow $top={21}><InfoDate>2025-08-19</InfoDate><InfoLink>查看详情</InfoLink></InfoRow>
          </InfoPanel>
        </ChartCol>
      </ChartGrid>

      <PillRow>
        <Pill><TrendIcon/>趋势顶底</Pill>
        <Pill><KeyIcon/>主力密码</Pill>
        <Pill><NineIcon/>神奇九转</Pill>
        <PillSep/>
        <Pill><RadarIcon/>个股雷达</Pill>
      </PillRow>
      <BlankBand/>

      <TradeBar>
        <IndexBox>
          <IndexTop>
            <IndexNum>3731.58</IndexNum>
            <svg width="28" height="18" viewBox="0 0 28 18"><path d="M2 16L14 2L26 16" fill="none" stroke="#555" strokeWidth="2.5"/></svg>
          </IndexTop>
          <IndexBottom>
            <IndexName>上证指数</IndexName>
            <IndexPct>+0.10%</IndexPct>
          </IndexBottom>
        </IndexBox>
        <TradeBtn $w={223}>买</TradeBtn>
        <TradeBtn $w={223}>卖</TradeBtn>
        <TradeBtn $w={222}>撤</TradeBtn>
        <MoreBtn><MoreIcon/>更多</MoreBtn>
      </TradeBar>

      <SysNav>
        <SysIcon width="46" height="46" viewBox="0 0 46 46" $gap={217} fill="#808080">
          <rect x="1" y="2" width="44" height="7" rx="3"/>
          <rect x="1" y="20" width="44" height="7" rx="3"/>
          <rect x="1" y="38" width="44" height="7" rx="3"/>
        </SysIcon>
        <SysIcon width="46" height="48" viewBox="0 0 46 48" $gap={227} fill="none" stroke="#808080" strokeWidth="5">
          <rect x="3" y="3" width="40" height="42" rx="8"/>
        </SysIcon>
        <Chevron w={30} h={48} color="#808080" stroke={5}/>
      </SysNav>
    </Page>
  );
}
